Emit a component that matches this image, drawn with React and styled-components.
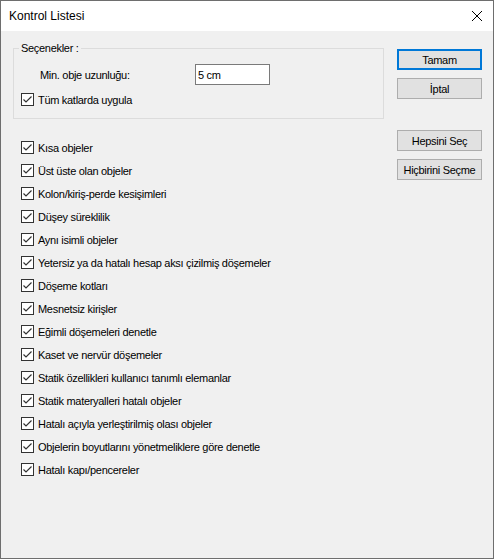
import React from 'react';
import styled, { createGlobalStyle } from 'styled-components';

const GlobalStyle = createGlobalStyle`
  html, body {
    margin: 0;
    padding: 0;
    background: #f0f0f0;
  }
  body {
    font-family: "Liberation Sans", Arial, sans-serif;
    font-size: 11px;
    color: #000;
  }
`;

const Window = styled.div`
  box-sizing: border-box;
  width: 494px;
  height: 559px;
  border: 1px solid #6e6e6e;
  background: #f0f0f0;
  display: flex;
  flex-direction: column;
`;

const TitleBar = styled.div`
  height: 30px;
  background: #fff;
  display: flex;
  align-items: center;
  justify-content: space-between;
  padding: 0 10px 0 8px;
  font-size: 12px;
`;

const CloseIcon = styled.svg`
  width: 12px;
  height: 12px;
`;

const Body = styled.div`
  flex: 1;
  display: flex;
  gap: 13px;
  padding: 11px 0 0 12px;
  letter-spacing: -0.3px;
`;

const LeftColumn = styled.div`
  width: 371px;
  display: flex;
  flex-direction: column;
`;

const GroupBox = styled.fieldset`
  margin: 0;
  padding: 9px 5px 12px 5px;
  border: 1px solid #dcdcdc;
  min-width: 0;
`;

const Legend = styled.legend`
  padding: 0 2px;
  line-height: 13px;
`;

const FieldRow = styled.div`
  display: flex;
  align-items: center;
  height: 21px;
`;

const FieldLabel = styled.label`
  box-sizing: content-box;
  flex-shrink: 0;
  width: 155px;
  padding-left: 21px;
`;

const TextInput = styled.input`
  box-sizing: border-box;
  width: 75px;
  height: 21px;
  border: 1px solid #7a7a7a;
  background: #fff;
  padding: 0 2px;
  font: inherit;
  font-size: 11px;
  letter-spacing: -0.3px;
  outline: none;
`;

const CheckRow = styled.label`
  display: flex;
  align-items: center;
  gap: 4px;
  height: ${p => p.$h || 23}px;
  margin-left: ${p => p.$indent || 0}px;
  margin-top: ${p => p.$top || 0}px;
`;

const Box = styled.span`
  box-sizing: border-box;
  width: 13px;
  height: 13px;
  border: 1px solid #333;
  background: #fff;
  display: flex;
  align-items: center;
  justify-content: center;
  flex-shrink: 0;
`;

const CheckList = styled.div`
  margin-top: 17px;
  padding-left: 8px;
  display: flex;
  flex-direction: column;
`;

const RightColumn = styled.div`
  margin-top: 7px;
  display: flex;
  flex-direction: column;
  gap: 8px;
  width: 85px;
`;

const Button = styled.button`
  box-sizing: border-box;
  width: 85px;
  height: 21px;
  margin-top: ${p => p.$top || 0}px;
  background: #e1e1e1;
  border: ${p => (p.$default ? '2px solid #0078d7' : '1px solid #adadad')};
  font: inherit;
  font-size: 11px;
  letter-spacing: -0.3px;
  color: #000;
  padding: 0;
  border-radius: 0;
`;

function Checkbox({ label, ...rest }) {
  return (
    <CheckRow {...rest}>
      <Box>
        <svg width="11" height="11" viewBox="0 0 11 11">
          <polyline points="1.5,5.5 4,8 9.5,2.5" fill="none" stroke="#333" strokeWidth="1.2" />
        </svg>
      </Box>
      <span>{label}</span>
    </CheckRow>
  );
}

const items = [
  'Kısa objeler',
  'Üst üste olan objeler',
  'Kolon/kiriş-perde kesişimleri',
  'Düşey süreklilik',
  'Aynı isimli objeler',
  'Yetersiz ya da hatalı hesap aksı çizilmiş döşemeler',
  'Döşeme kotları',
  'Mesnetsiz kirişler',
  'Eğimli döşemeleri denetle',
  'Kaset ve nervür döşemeler',
  'Statik özellikleri kullanıcı tanımlı elemanlar',
  'Statik materyalleri hatalı objeler',
  'Hatalı açıyla yerleştirilmiş olası objeler',
  'Objelerin boyutlarını yönetmeliklere göre denetle',
  'Hatalı kapı/pencereler',
];

export default function App() {
  return (
    <>
      <GlobalStyle />
      <Window>
        <TitleBar>
          <span>Kontrol Listesi</span>
          <CloseIcon viewBox="0 0 12 12">
            <path d="M1 1L11 11M11 1L1 11" stroke="#000" strokeWidth="1" fill="none" />
          </CloseIcon>
        </TitleBar>
        <Body>
          <LeftColumn>
            <GroupBox>
              <Legend>Seçenekler :</Legend>
              <FieldRow>
                <FieldLabel>Min. obje uzunluğu:</FieldLabel>
                <TextInput defaultValue="5 cm" />
              </FieldRow>
              <Checkbox label="Tüm katlarda uygula" $h={13} $indent={2} $top={8} />
            </GroupBox>
            <CheckList>
              {items.map(t => (
                <Checkbox key={t} label={t} />
              ))}
            </CheckList>
          </LeftColumn>
          <RightColumn>
            <Button $default>Tamam</Button>
            <Button>İptal</Button>
            <Button $top={23}>Hepsini Seç</Button>
            <Button>Hiçbirini Seçme</Button>
          </RightColumn>
        </Body>
      </Window>
    </>
  );
}
